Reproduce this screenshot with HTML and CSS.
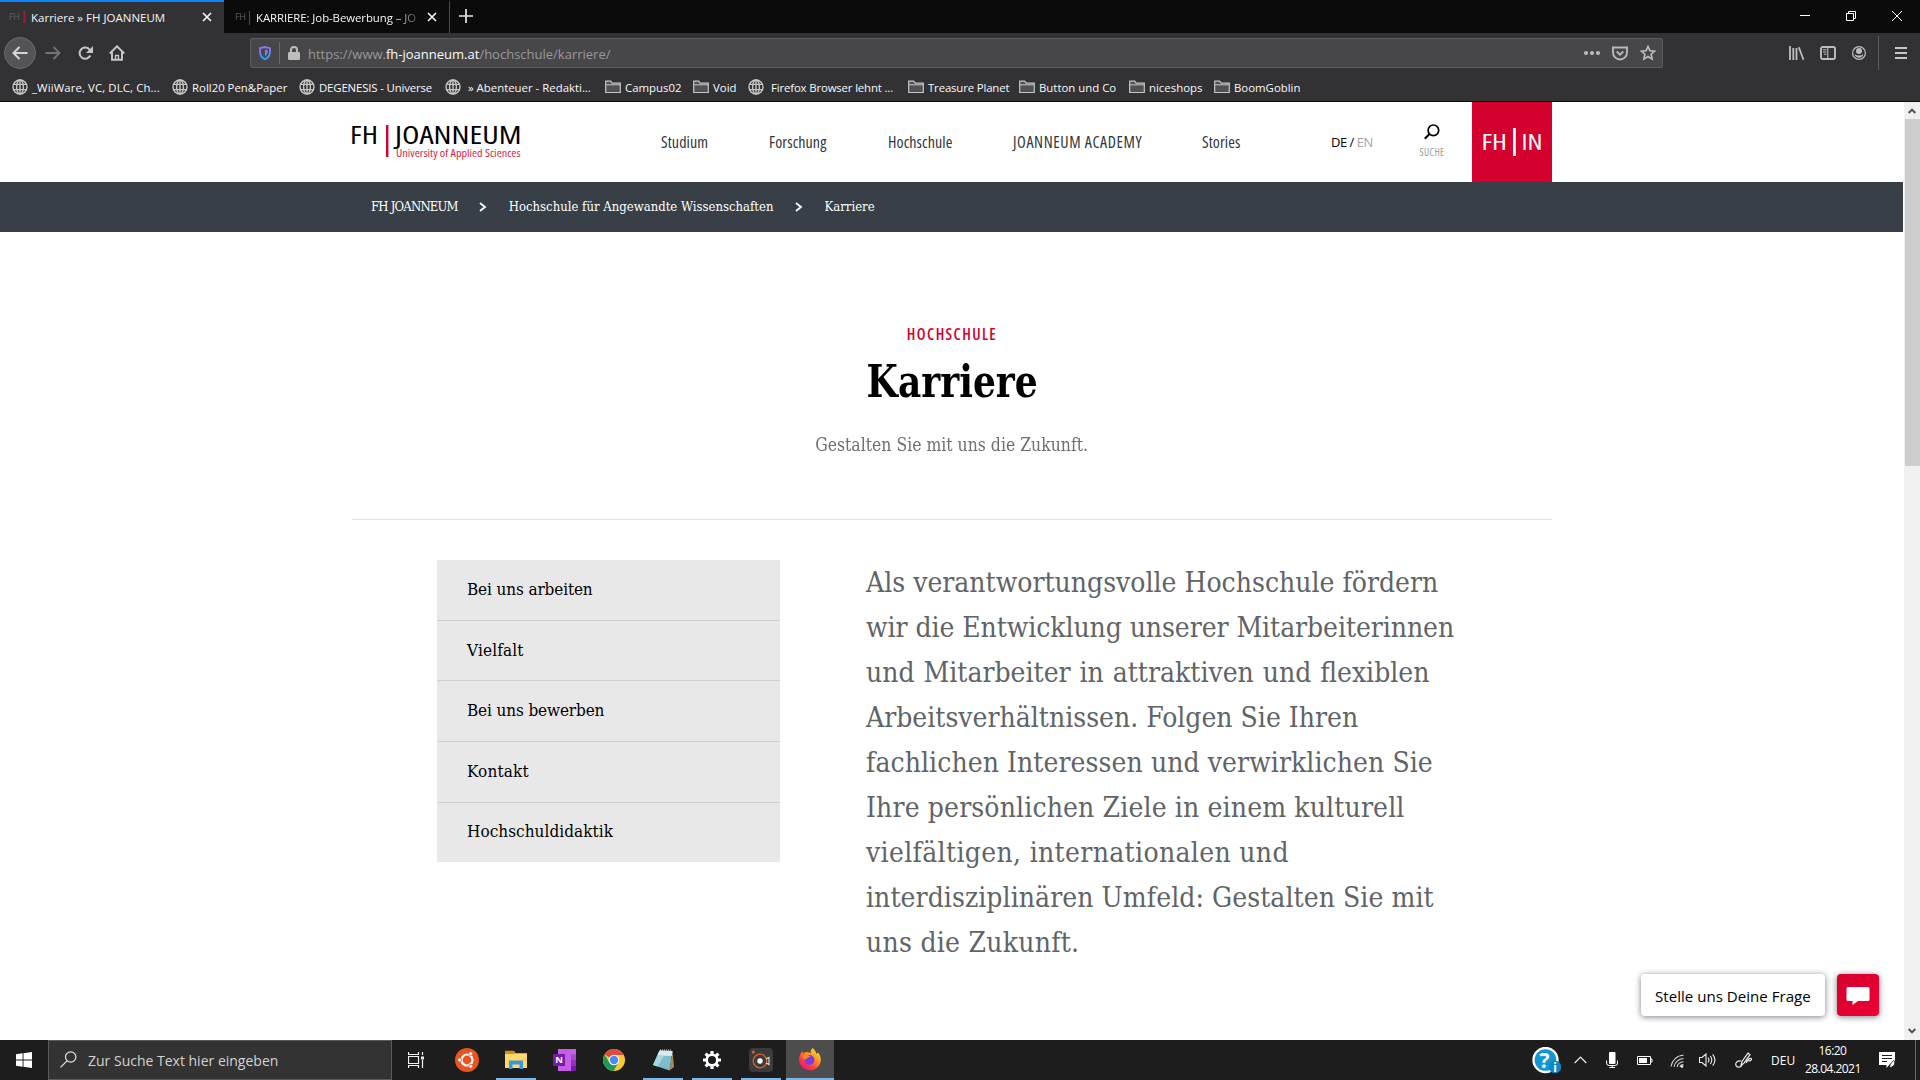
FILE: index.html
```html
<!DOCTYPE html>
<html lang="de">
<head>
<meta charset="utf-8">
<title>Karriere » FH JOANNEUM</title>
<link rel="stylesheet" href="styles.css">
</head>
<body>
<svg width="0" height="0" class="defs">
  <symbol id="globe" viewBox="0 0 16 16"><g fill="none" stroke="#c6c6c7" stroke-width="1.4"><circle cx="8" cy="8" r="7"/><ellipse cx="8" cy="8" rx="3.4" ry="7"/><path d="M8 1v14M1.5 5.4h13M1.5 10.6h13"/></g></symbol>
  <symbol id="folder" viewBox="0 0 16 16"><path d="M.7 13.5V2.2h5l1.4 2h8.2v9.3z" fill="#515153" stroke="#c6c6c7" stroke-width="1.2"/><path d="M1 5.8h14" stroke="#c6c6c7" stroke-width="1"/></symbol>
  <symbol id="cross" viewBox="0 0 10 10"><path d="M1 1l8 8M9 1L1 9" stroke="#f4f4f4" stroke-width="1.7" fill="none"/></symbol>
  <symbol id="chev" viewBox="0 0 8 10"><path d="M1 1l5 4-5 4" fill="none" stroke="#fff" stroke-width="1.8"/></symbol>
</svg>

<header class="tabs">
  <div class="tab active"><svg class="fav" width="18" height="14" viewBox="0 0 18 14"><text x="0" y="8.5" font-size="9" textLength="11" fill="#5f5f63">FH</text><path d="M15.500 0v12" stroke="#a01b33" stroke-width="2"/></svg><span class="tab-text">Karriere » FH JOANNEUM</span><svg class="x" width="10" height="10"><use href="#cross"/></svg></div>
  <div class="tab second"><svg class="fav" width="18" height="14" viewBox="0 0 18 14"><text x="0" y="8.5" font-size="9" textLength="11" fill="#5f5f63">FH</text><path d="M14.500 0v14" stroke="#c8102e" stroke-width="1"/></svg><span class="tab-text fade">KARRIERE: Job-Bewerbung – JO</span><svg class="x" width="10" height="10"><use href="#cross"/></svg></div>
  <svg class="plus" width="14" height="14"><path d="M7 0v14M0 7h14" stroke="#e8e8e8" stroke-width="1.7"/></svg>
  <div class="win">
    <svg width="10" height="10"><path d="M0 4.500h10" stroke="#fff"/></svg>
    <svg width="10" height="10"><path d="M.5 2.500h7v7h-7zM2.500 2.500v-2h7v7h-2" fill="none" stroke="#fff"/></svg>
    <svg width="10" height="10"><path d="M0 0l10 10M10 0L0 10" stroke="#fff" fill="none"/></svg>
  </div>
</header>

<div class="toolbar">
  <span class="back"><svg width="16" height="14" viewBox="0 0 16 14"><path d="M15.500 7H2M7.500 1L1.500 7l6 6" fill="none" stroke="#d6d6d7" stroke-width="2"/></svg></span>
  <svg class="fwd" width="16" height="14" viewBox="0 0 16 14"><path d="M.5 7H14M8.500 1l6 6-6 6" fill="none" stroke="#737375" stroke-width="1.800"/></svg>
  <svg class="reload" width="15" height="15" viewBox="0 0 15 15"><path d="M12.300 9.500A5.600 5.600 0 1 1 11.800 4" fill="none" stroke="#c6c6c7" stroke-width="2"/><path d="M15 0v7H8z" fill="#c6c6c7"/></svg>
  <svg class="home" width="16" height="16" viewBox="0 0 16 16"><path d="M.8 8.500L8 1.300l7.200 7.200M3 7v7.800h10V7" fill="none" stroke="#c6c6c7" stroke-width="1.900"/><path d="M6.500 15v-4.500h3V15" fill="none" stroke="#c6c6c7" stroke-width="1.300"/></svg>
  <div class="url">
    <svg class="shield" width="12" height="14" viewBox="0 0 12 14"><defs><linearGradient id="sg" x2="0" y2="1"><stop stop-color="#9b6ff5"/><stop offset="1" stop-color="#2aa4ff"/></linearGradient></defs><path d="M1 2.200L6 1l5 1.200V6c0 3.500-2 5.700-5 7.200C3 11.700 1 9.500 1 6z" fill="none" stroke="url(#sg)" stroke-width="1.800"/><path d="M6 3.600V10.300C7.800 9 8.600 7.800 8.600 6V4.200z" fill="url(#sg)"/></svg>
    <svg class="lock" width="12" height="14" viewBox="0 0 12 14"><path d="M3 7V4a3 3 0 0 1 6 0v3" fill="none" stroke="#bdbdbe" stroke-width="2"/><rect y="6" width="12" height="8" rx="1.200" fill="#bdbdbe"/></svg>
    <span class="addr">https://www.<b>fh-joanneum.at</b>/hochschule/karriere/</span>
    <svg class="dots" width="16" height="4"><g fill="#bdbdbe"><circle cx="2" cy="2" r="2"/><circle cx="8" cy="2" r="2"/><circle cx="14" cy="2" r="2"/></g></svg>
    <svg class="pocket" width="16" height="15" viewBox="0 0 16 15"><path d="M1 1.500h14V6.500a7 7 0 0 1-14 0z" fill="none" stroke="#b8b8b9" stroke-width="1.900"/><path d="M4.700 5.500L8 8.700l3.300-3.200" fill="none" stroke="#b8b8b9" stroke-width="2"/></svg>
    <svg class="star" width="16" height="16" viewBox="0 0 16 16"><path d="M8 1.600l1.900 4.100 4.600.5-3.400 3 1 4.800L8 11.500 3.900 14l1-4.800-3.400-3 4.600-.5z" fill="none" stroke="#b8b8b9" stroke-width="1.700"/></svg>
  </div>
  <div class="tools">
    <svg width="16" height="14" viewBox="0 0 16 14"><path d="M1 0v14M4.300 2v12M7.500 2v12M9.800 1.300L14.500 13.700" stroke="#bdbdbe" stroke-width="1.800"/></svg>
    <svg width="16" height="14" viewBox="0 0 16 14"><rect x="1" y="1" width="14" height="12" rx="1.800" fill="none" stroke="#bdbdbe" stroke-width="1.900"/><path d="M7.800 1v12M3 3.800h3.500M3 6h3.500M4 8.200h2.500" stroke="#bdbdbe" stroke-width="1.100"/></svg>
    <svg width="14" height="14" viewBox="0 0 14 14"><circle cx="7" cy="7" r="6.400" fill="none" stroke="#bdbdbe" stroke-width="1.200"/><circle cx="7" cy="5" r="3" fill="#bdbdbe"/><path d="M2.700 8.300c2.300 1.700 6.300 1.700 8.600 0-.2 4.600-8.400 4.600-8.600 0z" fill="#bdbdbe"/></svg>
    <i class="sep"></i>
    <svg width="12" height="12"><path d="M0 1h12M0 6h12M0 11h12" stroke="#c6c6c7" stroke-width="2"/></svg>
  </div>
</div>

<nav class="bookmarks">
  <a><svg width="16" height="16"><use href="#globe"/></svg>_WiiWare, VC, DLC, Ch...</a>
  <a><svg width="16" height="16"><use href="#globe"/></svg>Roll20 Pen&amp;Paper</a>
  <a><svg width="16" height="16"><use href="#globe"/></svg>DEGENESIS - Universe</a>
  <a class="wide"><svg width="16" height="16"><use href="#globe"/></svg>» Abenteuer - Redakti...</a>
  <a><svg width="16" height="16"><use href="#folder"/></svg>Campus02</a>
  <a><svg width="16" height="16"><use href="#folder"/></svg>Void</a>
  <a class="wide"><svg width="16" height="16"><use href="#globe"/></svg>Firefox Browser lehnt ...</a>
  <a><svg width="16" height="16"><use href="#folder"/></svg>Treasure Planet</a>
  <a><svg width="16" height="16"><use href="#folder"/></svg>Button und Co</a>
  <a><svg width="16" height="16"><use href="#folder"/></svg>niceshops</a>
  <a><svg width="16" height="16"><use href="#folder"/></svg>BoomGoblin</a>
</nav>

<div class="viewport">
  <div class="page">
    <div class="site-head">
      <svg class="logo" width="172" height="40" viewBox="0 0 172 40">
        <text x="-2" y="21.500" font-size="26" textLength="28" lengthAdjust="spacingAndGlyphs" font-weight="500">FH</text>
        <rect x="34" y="3" width="2.400" height="32" fill="#d4002d"/>
        <text x="43" y="21.500" font-size="26" textLength="126.500" lengthAdjust="spacingAndGlyphs" font-weight="500">JOANNEUM</text>
        <text x="44" y="35" font-size="10" textLength="124.500" lengthAdjust="spacingAndGlyphs" fill="#d9234a">University of Applied Sciences</text>
      </svg>
      <nav class="main-nav"><a>Studium</a><a>Forschung</a><a>Hochschule</a><a class="caps">JOANNEUM ACADEMY</a><a>Stories</a></nav>
      <div class="lang">DE / <span>EN</span></div>
      <div class="search"><svg width="16" height="16" viewBox="0 0 16 16"><circle cx="9.400" cy="6.300" r="5.300" fill="none" stroke="#000" stroke-width="1.700"/><path d="M5.500 10L.8 14.800" stroke="#000" stroke-width="2"/></svg><span>SUCHE</span></div>
      <div class="fhin"><svg width="80" height="80"><g fill="#fff" font-size="22" font-weight="500"><text x="9.500" y="48" textLength="25.500" lengthAdjust="spacingAndGlyphs">FH</text><rect x="41" y="26" width="2.800" height="28"/><text x="49.500" y="48" textLength="21" lengthAdjust="spacingAndGlyphs">IN</text></g></svg></div>
    </div>
    <div class="crumbs"><a class="caps">FH JOANNEUM</a><svg width="8" height="10"><use href="#chev"/></svg><a>Hochschule für Angewandte Wissenschaften</a><svg width="8" height="10"><use href="#chev"/></svg><a>Karriere</a></div>
    <section class="hero">
      <p class="eyebrow">HOCHSCHULE</p>
      <h1>Karriere</h1>
      <p class="sub">Gestalten Sie mit uns die Zukunft.</p>
    </section>
    <div class="content">
      <ul class="side"><li>Bei uns arbeiten</li><li>Vielfalt</li><li>Bei uns bewerben</li><li>Kontakt</li><li>Hochschuldidaktik</li></ul>
      <p class="lead"><span>Als verantwortungsvolle Hochschule fördern</span> <span>wir die Entwicklung unserer Mitarbeiterinnen</span> <span>und Mitarbeiter in attraktiven und flexiblen</span> <span>Arbeitsverhältnissen. Folgen Sie Ihren</span> <span>fachlichen Interessen und verwirklichen Sie</span> <span>Ihre persönlichen Ziele in einem kulturell</span> <span>vielfältigen, internationalen und</span> <span>interdisziplinären Umfeld: Gestalten Sie mit</span> <span>uns die Zukunft.</span></p>
    </div>
    <div class="chat">
      <div class="chat-label">Stelle uns Deine Frage</div>
      <div class="chat-btn"><svg width="24" height="20" viewBox="0 0 24 20"><path d="M2 1h20a1.500 1.500 0 0 1 1.500 1.500v11A1.500 1.500 0 0 1 22 15H12l-5.500 4V15H2a1.500 1.500 0 0 1-1.500-1.500v-11A1.500 1.500 0 0 1 2 1z" fill="#fff"/></svg></div>
    </div>
  </div>
  <div class="scroll">
    <svg width="8" height="6"><path d="M.7 5L4 1.600 7.300 5" fill="none" stroke="#505050" stroke-width="2"/></svg>
    <i></i>
    <svg width="8" height="6"><path d="M.7 1L4 4.400 7.300 1" fill="none" stroke="#505050" stroke-width="2"/></svg>
  </div>
</div>

<footer class="taskbar">
  <div class="start"><svg width="16" height="16" viewBox="0 0 16 16"><path d="M0 2.200L6.600 1.300V7.500H0zM7.500 1.200L16 0v7.500H7.500zM0 8.500h6.600v6.200L0 13.800zM7.500 8.500H16V16l-8.500-1.200z" fill="#fff"/></svg></div>
  <div class="find"><svg width="17" height="17" viewBox="0 0 17 17"><circle cx="10.700" cy="6" r="5.200" fill="none" stroke="#e6e6e6" stroke-width="1.200"/><path d="M7 9.800L.5 16.300" stroke="#e6e6e6" stroke-width="1.200"/></svg>Zur Suche Text hier eingeben</div>
  <div class="apps">
    <span class="view"><svg width="16" height="16" viewBox="0 0 16 16"><path d="M.5 4.500h10v7H.5zM.5 0v2.500h10V0M.5 16v-2.500h10V16M14.500 0v3M14.500 8v8" fill="none" stroke="#f2f2f2" stroke-width="1.200"/><rect x="13" y="4.500" width="3" height="3" fill="#f2f2f2"/></svg></span>
    <span><svg width="24" height="24" viewBox="0 0 24 24"><circle cx="12" cy="12" r="12" fill="#e95420"/><circle cx="12" cy="12" r="5.500" fill="none" stroke="#fff" stroke-width="2.200"/><g fill="#fff" stroke="#e95420" stroke-width=".8"><circle cx="4.700" cy="12" r="2"/><circle cx="15.700" cy="5.700" r="2"/><circle cx="15.700" cy="18.300" r="2"/></g></svg></span>
    <span class="run"><svg width="22" height="20" viewBox="0 0 22 20"><path d="M0 1h9l1.500 2H22v15H0z" fill="#e9a820"/><path d="M0 4h22v14H0z" fill="#ffd76a"/><path d="M0 .8h8.500L10 2.500 8.800 4H0z" fill="#d39112"/><path d="M4 19v-8.500h14V19h-3.500v-4.500h-7V19z" fill="#3b97dd"/></svg></span>
    <span><svg width="24" height="22" viewBox="0 0 24 22"><path d="M5 0h18v22H5z" fill="#c55fe6"/><path d="M18 5.500h5V11h-5z" fill="#ab47d4"/><path d="M18 11h5v5.500h-5z" fill="#9332bf"/><path d="M18 16.500h5V22h-5z" fill="#7719aa"/><rect y="5" width="12" height="12" fill="#7719aa"/><text x="2.300" y="14.300" font-size="9.500" font-weight="700" fill="#fff">N</text></svg></span>
    <span><svg width="22" height="22" viewBox="0 0 22 22"><circle cx="11" cy="11" r="11" fill="#fbc934"/><path d="M11 11L1.500 5.500A11 11 0 0 1 20.500 5.500L20.800 6H11z" fill="#dd4b3e"/><path d="M1.500 5.500A11 11 0 0 0 10.500 22L15.500 13.500 11 11 6.500 13.500z" fill="#1d9a58"/><circle cx="11" cy="11" r="5.300" fill="#fff"/><circle cx="11" cy="11" r="4.200" fill="#4a8af4"/></svg></span>
    <span class="run"><svg width="22" height="22" viewBox="0 0 22 22"><path d="M20.500 2L22 18l-4.500 3.500z" fill="#a98b58"/><path d="M7.500 1.500L20.500 2l-3 19.500L1 16z" fill="#7fbccb"/><path d="M7.500 1.500L20.500 2l-.8 5L5.200 6.500z" fill="#d4ecf2"/><path d="M5.200 6.500l7 .3-6.500 10.700L1 16z" fill="#a5d6e0"/><path d="M8 1h12" stroke="#eee" stroke-width="1.200" stroke-dasharray="1 1"/></svg></span>
    <span class="run"><svg width="18" height="18" viewBox="0 0 18 18"><circle cx="9" cy="9" r="5.300" fill="none" stroke="#fff" stroke-width="2.600"/><g stroke="#fff" stroke-width="3.200"><path d="M9 0v3.500M9 14.500V18M0 9h3.500M14.500 9H18M2.600 2.600l2.500 2.500M12.900 12.900l2.500 2.500M2.600 15.400l2.500-2.500M12.900 5.100l2.500-2.500"/></g></svg></span>
    <span class="run"><svg width="24" height="24" viewBox="0 0 24 24"><rect width="24" height="24" rx="4" fill="#3b3b3c"/><circle cx="11" cy="13" r="6.800" fill="none" stroke="#d9622b" stroke-width="1.300"/><circle cx="11" cy="13" r="2.700" fill="#fff"/><circle cx="4.300" cy="4" r="1.500" fill="#d9622b"/><path d="M17 11l3-1.500v7L17 15" fill="none" stroke="#ddd" stroke-width="1.100"/></svg></span>
    <span class="run on"><svg width="24" height="24" viewBox="0 0 24 24"><defs><linearGradient id="ff" x1="1" y1="0" x2=".2" y2="1"><stop stop-color="#fff44f"/><stop offset=".4" stop-color="#ff9a1f"/><stop offset=".75" stop-color="#ff3647"/><stop offset="1" stop-color="#e31587"/></linearGradient></defs><path d="M14.500 0c2 1.500 3.500 3.500 4 6l1.500-1.500c2.500 3 3.500 6 2.500 10A11 11 0 0 1 1 12.500C.8 9 2 5.500 4.500 3l.5 2.500C6 4.500 7 4 8.500 4c1.500 0 3 .5 4 1.500C12.500 3.500 13 1.500 14.500 0z" fill="url(#ff)"/><circle cx="11.500" cy="12" r="5" fill="#7a3be0"/><path d="M4 8c3-2 6-1.500 8.500.8-2 .2-3.500 1-4.500 2.700-1.500-.3-3-1.500-4-3.500z" fill="#ff8a1f"/></svg></span>
  </div>
  <div class="tray">
    <svg class="help" width="29" height="27" viewBox="0 0 29 27"><circle cx="13.500" cy="13" r="12" fill="#1296d4" stroke="#fff" stroke-width="2.400"/><text x="7.500" y="20.500" font-size="21" font-weight="700" fill="#fff">?</text><circle cx="23" cy="20" r="6.200" fill="#1187c4"/><text x="21.300" y="24.500" font-size="12" font-weight="700" fill="#fff">i</text></svg>
    <svg class="up" width="13" height="8"><path d="M.7 7L6.500 1.200 12.300 7" fill="none" stroke="#eee" stroke-width="1.200"/></svg>
    <svg class="mic" width="12" height="16" viewBox="0 0 12 16"><rect x="3" y="0" width="6.500" height="12" rx="1" fill="#fff"/><path d="M.6 8.500v2.500q0 2.500 2.500 2.500h6q2.500 0 2.500-2.500V8.500M6.200 13.500v2M3.500 15.500h5.500" fill="none" stroke="#fff"/></svg>
    <svg class="bat" width="16" height="9" viewBox="0 0 16 9"><path d="M.5.5h13v8H.5zM13.500 3h1.500v3h-1.500" fill="none" stroke="#fff"/><path d="M2 2h8v5H2z" fill="#fff"/></svg>
    <svg class="wifi" width="14" height="14" viewBox="0 0 14 14"><path d="M1 12.500C2 6 7 1.500 13.500 1.300M4 12.800c.7-4.500 4.500-8 9.500-8.300M7 13c.5-3 3-5 6.500-5.300M10 13c.3-1.500 1.500-2.500 3.500-2.500" fill="none" stroke="#d5d5d5" stroke-width="1.100"/><circle cx="12" cy="12.500" r="1.300" fill="#fff"/></svg>
    <svg class="vol" width="17" height="14" viewBox="0 0 17 14"><path d="M.5 4.500h2.500l4-3.500v12l-4-3.500H.5zM9 4.700q1.800 2.300 0 4.600M11.300 3q3 4 0 8M13.700 1.300q4.500 5.700 0 11.400" fill="none" stroke="#eee" stroke-width="1.100"/></svg>
    <svg class="pen" width="17" height="16" viewBox="0 0 17 16"><path d="M6 13.500l1-4L13 1.200l2 1.400-6 8.500zM6 9C2 8.500 0 11 1 13.500s5 2 6-.5M11 11c1.500-3 3-5 5-4.500s-.5 2.500-3 2.500" fill="none" stroke="#eee" stroke-width="1.200"/></svg>
    <span class="deu">DEU</span>
    <span class="clock">16:20<br>28.04.2021</span>
    <svg class="note" width="17" height="17" viewBox="0 0 17 17"><path d="M0 0h16v8.500l-6 4.500-2.500 3v-3H0z" fill="#fff"/><path d="M3 3.500h10M3 6.500h10M3 9.500h5" stroke="#1d1d1d" stroke-width="1.200"/><path d="M10.500 14.500l1-2.500 3-3.500 1.500 1.500-1 3.500-3 2z" fill="#fff" stroke="#1d1d1d" stroke-width=".8"/></svg>
  </div>
</footer>
</body>
</html>
```
FILE: styles.css
```css
*{box-sizing:border-box}
body{margin:0;width:1920px;height:1080px;overflow:hidden;display:flex;flex-direction:column;font-family:"Open Sans","Noto Sans",sans-serif;background:#fff}
svg{flex:none;display:block}
p,h1,ul{margin:0;padding:0}
.defs{position:absolute}

/* browser window */
.tabs{height:33px;background:#0b0b0b;display:flex;align-items:center;flex:none}
.tab{width:224px;height:33px;display:flex;align-items:center;padding:2px 12px 0 9px;border-top:2px solid #0a84ff;background:#323234;color:#f4f4f4;font-size:11.5px}
.tab .fav{margin-right:4px;margin-top:-2px}
.tab-text{flex:1;white-space:nowrap;margin-top:-3px}
.tab .x{margin-top:-4px}
.second{width:226px;background:none;border-top-color:transparent;border-right:1px solid #4b4b4d;padding-left:11px}
.second .fav{margin-right:3px}
.fade{font-size:11.4px;letter-spacing:-.07px;-webkit-mask-image:linear-gradient(90deg,#000 138px,transparent 168px);mask-image:linear-gradient(90deg,#000 138px,transparent 168px)}
.plus{margin-left:9px;margin-top:-1px}
.win{margin-left:auto;margin-right:18px;display:flex;gap:36px;margin-top:-1px}
.toolbar{height:38px;flex:none;background:#323234;display:flex;align-items:center;padding:2px 13px 0 4px}
.back{width:32px;height:32px;border-radius:50%;background:#545456;border:1px solid #6a6a6c;display:grid;place-items:center}
.fwd{margin-left:9px}
.reload{margin-left:17px}
.home{margin-left:16px}
.url{width:1413px;height:30px;margin-left:125px;border:1px solid #5c5c5e;border-radius:2px;background:#474749;display:flex;align-items:center;padding:0 6px 0 8px}
.lock{margin-left:8px;box-sizing:content-box;border-left:1px solid #6a6a6c;padding:4px 0 4px 8px}
.addr{margin-left:8px;padding-top:2px;font-size:13px;color:#98989a;flex:1}
.addr b{font-weight:400;color:#f9f9fa}
.dots{margin-right:12px}
.pocket{margin-right:12px}
.tools{margin-left:auto;display:flex;align-items:center}
.tools svg{margin-left:16px}
.tools .sep{width:1px;height:34px;background:#5c5c5e;margin-left:12px}
.tools svg:nth-child(2){margin-left:15px}
.bookmarks{height:31px;flex:none;background:#323234;border-bottom:1px solid #0c0c0d;color:#f9f9fa;font-size:11.4px;display:grid;grid-template-columns:160px 127px 146px 160px 88px 55px 160px 111px 110px 85px 110px;padding-left:12px;padding-top:2px}
.bookmarks a{display:flex;align-items:center;gap:4px;white-space:nowrap}
.bookmarks .wide{gap:7px}
.bookmarks a:nth-child(1){letter-spacing:.1px}
.bookmarks a:nth-child(3),.bookmarks a:nth-child(7),.bookmarks a:nth-child(8){letter-spacing:-.15px}

/* web page */
.viewport{height:938px;flex:none;display:flex}
.page{width:1904px;border-right:1px solid #fff;position:relative}
.site-head{height:80px;display:flex;align-items:center;width:1200px;margin-left:352px;font-stretch:82%}
.logo{overflow:visible}
.logo text,.fhin text{font-stretch:80%}
.main-nav{display:grid;grid-template-columns:108px 119px 125px 189px 129px;margin-left:137px;font-size:16px;color:#2f363c;letter-spacing:.1px}
.main-nav a{white-space:nowrap}
.main-nav .caps{letter-spacing:.6px}
.lang{font-size:13px;font-stretch:95%;letter-spacing:-.5px;width:88px;white-space:nowrap;margin-top:-1px}
.lang span{color:#a5a5a5}
.search{width:26px;font-size:10px;letter-spacing:.4px;color:#999;display:flex;flex-direction:column;align-items:center;gap:6px;line-height:13px;margin-top:-1px}
.fhin{width:80px;height:80px;background:#d4002d;margin-left:auto}
.crumbs{height:50px;background:#383f46;color:#fff;display:flex;align-items:center;padding:0 0 2px 371px;font:13px "DejaVu Serif Condensed","DejaVu Serif",serif}
.crumbs a{white-space:nowrap}
.crumbs .caps{letter-spacing:-.8px}
.crumbs svg{margin:1px 22px 0 21px}
.hero{width:1200px;height:288px;margin-left:352px;border-bottom:1px solid #e3e3e3;padding-top:89px;display:flex;flex-direction:column;align-items:center;font-family:"DejaVu Serif Condensed","DejaVu Serif",serif}
.eyebrow{font:600 15.500px/24px "Open Sans",sans-serif;font-stretch:81%;letter-spacing:1.400px;color:#d4002d;padding-top:1px}
h1{font-size:45px;line-height:60px;margin-top:6px;transform:scaleX(.89)}
.sub{font-size:19px;line-height:30px;margin-top:17px;color:#6c7073;transform:scaleX(.918)}
.content{display:grid;grid-template-columns:343px 1fr;column-gap:86px;padding:40px 0 0 437px;align-items:start;font-family:"DejaVu Serif Condensed","DejaVu Serif",serif}
.side{list-style:none;background:#e8e8e8;font-size:17px;color:#000}
.side li{height:60.700px;padding:0 0 2px 30px;display:flex;align-items:center;border-bottom:1px solid #cfcfcf}
.side li:nth-child(odd){letter-spacing:-.13px}
.side li:nth-child(even){letter-spacing:.15px}
.side li:last-child{border-bottom:0;height:59.200px;letter-spacing:.05px}
.lead{font-size:28px;line-height:45px;color:#5f6467;white-space:nowrap}
.lead span{display:block}
.lead span:nth-child(2){letter-spacing:-.07px}
.lead span:nth-child(3){word-spacing:.9px}
.lead span:nth-child(5){letter-spacing:.07px}
.lead span:nth-child(6){letter-spacing:.14px}
.lead span:nth-child(7){letter-spacing:.33px}
.lead span:nth-child(8){letter-spacing:.06px}
.lead span:nth-child(9){letter-spacing:.25px}
.chat{position:absolute;right:24px;bottom:24px;display:flex;gap:12px}
.chat-label{width:184px;height:42px;border-radius:4px;background:#fff;box-shadow:0 1px 6px rgba(40,40,60,.6);padding-left:14px;font-size:15.100px;line-height:44px;color:#000;white-space:nowrap}
.chat-btn{width:42px;height:42px;border-radius:4px;background:linear-gradient(135deg,#d4002d,#ee0035);box-shadow:0 1px 6px rgba(40,40,60,.6);display:grid;place-items:center;padding-top:2px}
.scroll{width:16px;background:#f0f0f0;display:flex;flex-direction:column;align-items:center;padding:6px 0}
.scroll i{width:15px;height:347px;background:#cdcdcd;margin:5px 0 auto}

/* taskbar */
.taskbar{height:40px;flex:none;background:#1d1d1d;display:flex;align-items:center;color:#fff}
.start{width:48px;padding-left:16px}
.find{width:344px;height:40px;background:#333;border:1px solid #5b5b5b;display:flex;align-items:center;gap:11px;padding:1px 0 0 11px;font-size:14px;color:#d2d2d2}
.find svg{margin-top:-2px}
.apps{display:grid;grid-template-columns:repeat(9,49px);height:40px}
.apps span{display:grid;place-items:center;position:relative;padding-left:2px}
.apps .view{padding:0 1px 0 0}
.apps .run::after{content:"";position:absolute;left:6px;right:3px;bottom:0;height:2px;background:#76b9ed}
.apps .on{background:#4d4d4d;width:48px;margin-left:2px;padding:0}
.apps .on::after{left:0;right:0}
.tray{margin-left:auto;display:flex;align-items:center;height:40px;width:388px;border-right:1px solid #6b6b6b;margin-right:4px}
.help{margin-left:4px}
.up{margin-left:13px}
.mic{margin-left:19px}
.bat{margin-left:19px}
.wifi{margin-left:17px;margin-top:2px}
.vol{margin-left:15px}
.pen{margin-left:19px}
.deu{margin-left:19px;width:34px;font-size:12px;font-stretch:90%}
.clock{width:55px;text-align:center;font-size:12px;line-height:18px;font-stretch:93%;letter-spacing:-.550px;white-space:nowrap}
.note{margin-left:19px}
```
